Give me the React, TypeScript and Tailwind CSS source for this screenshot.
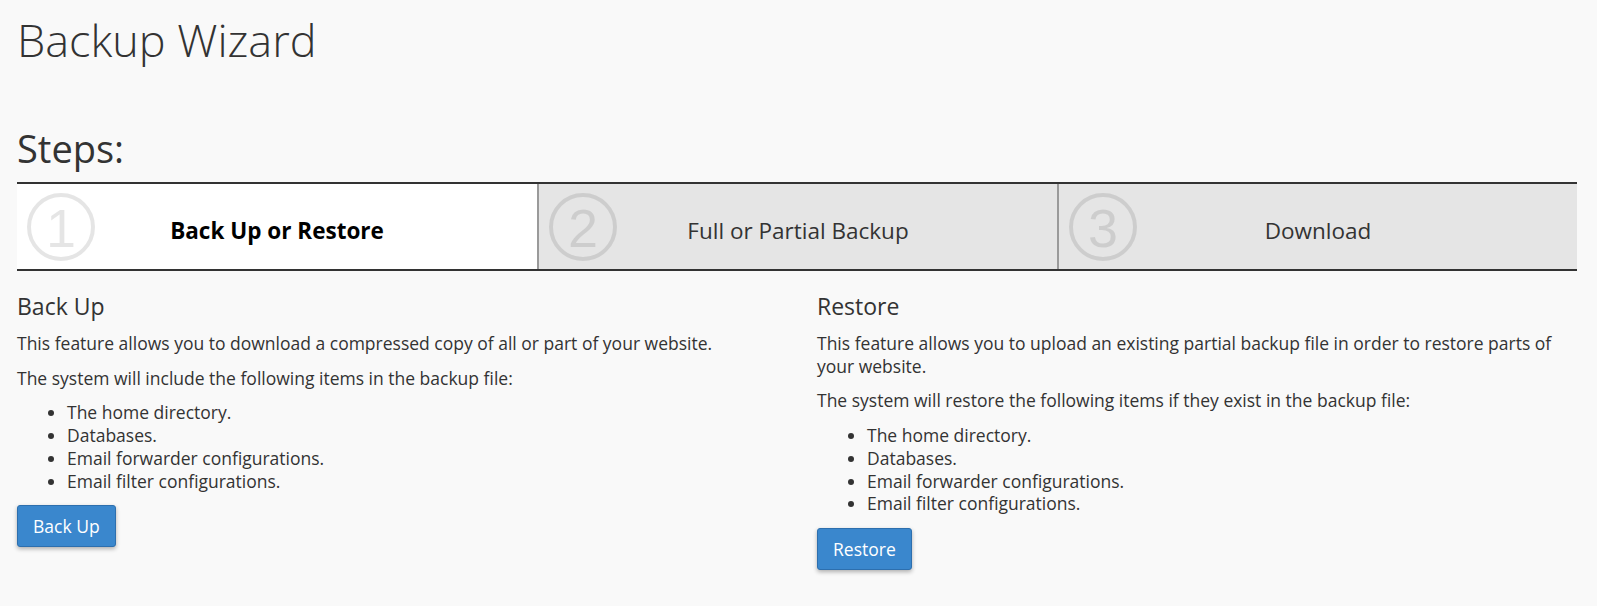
import React from 'react';

const steps = [
  { n: '1', label: 'Back Up or Restore', active: true },
  { n: '2', label: 'Full or Partial Backup', active: false },
  { n: '3', label: 'Download', active: false },
];

const items = [
  'The home directory.',
  'Databases.',
  'Email forwarder configurations.',
  'Email filter configurations.',
];

function StepCell({ n, label, active, first }: { n: string; label: string; active: boolean; first: boolean }) {
  return (
    <div
      className={`relative flex items-center justify-center h-[85px] ${active ? 'bg-white' : 'bg-[#e5e5e5]'} ${first ? '' : 'border-l-2 border-[#9a9a9a]'}`}
    >
      <div className="absolute left-[10px] top-1/2 -translate-y-1/2 w-[68px] h-[68px] rounded-full border-[4px] border-black/10 flex items-center justify-center">
        <span className="font-['Liberation_Sans',sans-serif] text-[54px] leading-none text-black/10 mt-[2px]">{n}</span>
      </div>
      <span className={`mt-[9px] text-[22.5px] leading-[28px] ${active ? 'font-bold text-black' : 'text-[#333]'}`}>{label}</span>
    </div>
  );
}

function Section({ title, intro, lead, button }: { title: string; intro: string; lead: string; button: string }) {
  return (
    <div>
      <h3 className="text-[23px] leading-[28px] mb-3">{title}</h3>
      <p className="mb-3">{intro}</p>
      <p className="mb-3">{lead}</p>
      <ul className="list-disc pl-[50px] mb-[13px]">
        {items.map((it) => (
          <li key={it}>{it}</li>
        ))}
      </ul>
      <button className="h-[42px] px-[15px] bg-[#3a87cd] border border-[#2d6fae] rounded-[3px] text-white text-[17.5px] shadow-[0_2px_4px_rgba(0,0,0,0.3)]">
        {button}
      </button>
    </div>
  );
}

export default function App() {
  return (
    <div className="min-h-screen bg-[#f9f9f9] text-[#333] font-['Open_Sans',sans-serif] text-[17.5px] leading-[22.7px] pl-[17px] pr-[20px] pt-[15px] pb-6">
      <h1 className="text-[45px] leading-[50px] font-light">Backup Wizard</h1>

      <h2 className="mt-[61px] text-[38px] leading-[44px]">Steps:</h2>

      <div className="mt-[12px] grid grid-cols-3 border-y-2 border-[#333]">
        {steps.map((s, i) => (
          <StepCell key={s.n} n={s.n} label={s.label} active={s.active} first={i === 0} />
        ))}
      </div>

      <div className="mt-[21px] grid grid-cols-2 gap-[40px]">
        <Section
          title="Back Up"
          intro="This feature allows you to download a compressed copy of all or part of your website."
          lead="The system will include the following items in the backup file:"
          button="Back Up"
        />
        <Section
          title="Restore"
          intro="This feature allows you to upload an existing partial backup file in order to restore parts of your website."
          lead="The system will restore the following items if they exist in the backup file:"
          button="Restore"
        />
      </div>
    </div>
  );
}
